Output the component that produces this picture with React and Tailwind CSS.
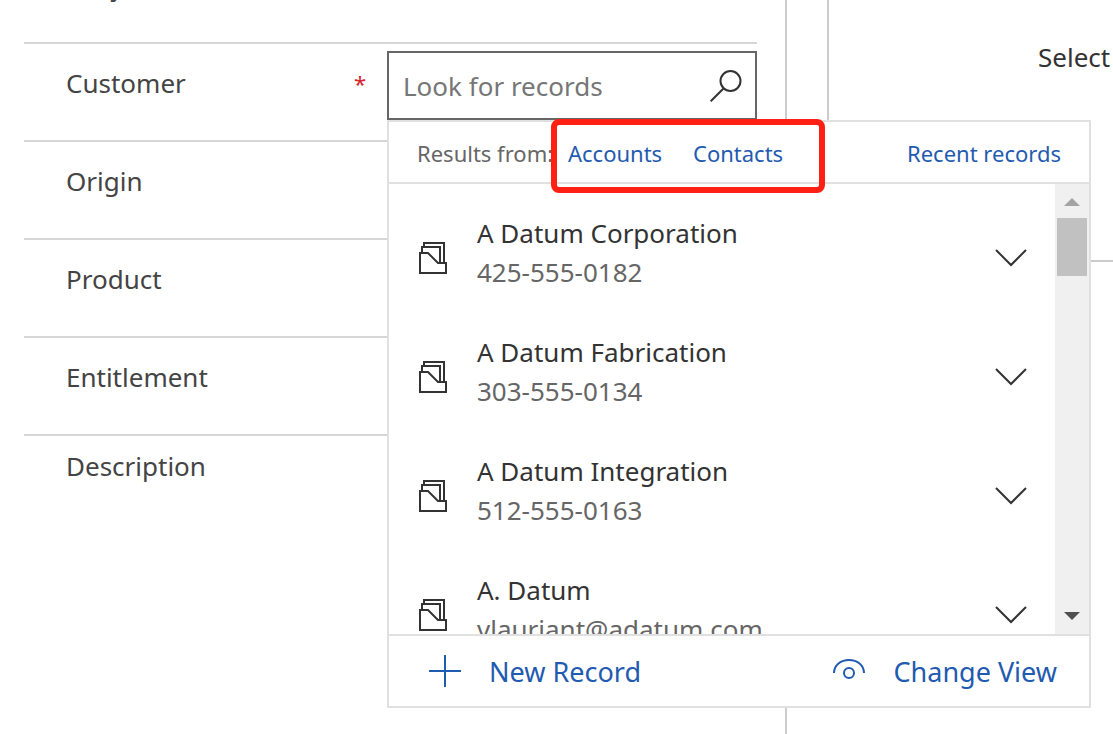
const records = [
  { name: 'A Datum Corporation', detail: '425-555-0182' },
  { name: 'A Datum Fabrication', detail: '303-555-0134' },
  { name: 'A Datum Integration', detail: '512-555-0163' },
  { name: 'A. Datum', detail: 'vlauriant@adatum.com' },
];

function SearchIcon() {
  return (
    <svg width="32" height="32" viewBox="0 0 32 32" fill="none" stroke="#333" strokeWidth="2" aria-hidden="true">
      <circle cx="20.5" cy="11" r="10" />
      <path d="M13.5 18.5 0.7 31.3" />
    </svg>
  );
}

function AccountIcon() {
  return (
    <svg width="28" height="32" viewBox="0 0 28 32" fill="none" stroke="#333" strokeWidth="2" aria-hidden="true">
      <path d="M1 11H9L19 21H27V31H1Z" />
      <path d="M3 11V5H21V21" />
      <path d="M5 5V1H25V21" />
    </svg>
  );
}

function ChevronIcon() {
  return (
    <svg width="32" height="18" viewBox="0 0 32 18" fill="none" stroke="#333" strokeWidth="2" aria-hidden="true">
      <path d="M1 1 16 16 31 1" />
    </svg>
  );
}

function PlusIcon() {
  return (
    <svg width="32" height="32" viewBox="0 0 32 32" fill="none" stroke="currentColor" strokeWidth="2" aria-hidden="true">
      <path d="M16 0V32M0 16H32" />
    </svg>
  );
}

function ViewIcon() {
  return (
    <svg width="32" height="32" viewBox="0 0 32 32" fill="none" stroke="currentColor" strokeWidth="2" aria-hidden="true">
      <path d="M1 18C1 10 8 5 16 5S31 10 31 18" />
      <circle cx="16" cy="18" r="5" />
    </svg>
  );
}

function Row({ label, last }) {
  return (
    <div className={last ? 'px-[42px] py-[10px]' : 'flex h-[98px] border-b-2 border-[#d6d6d6] px-[42px] pt-[19px]'}>
      {label}
    </div>
  );
}

function LookupMenu() {
  return (
    <div className="absolute left-0 top-full z-10 w-[704px] border-2 border-[#e0e0e0] bg-white">
      <div className="flex h-[62px] items-center border-b-2 border-[#e0e0e0] px-[28px] pt-[2px] text-[22px] text-[#666]">
        <span className="w-[151px] whitespace-nowrap">Results from:</span>
        <a href="#accounts" className="w-[125px] text-[#1f5bb0]">Accounts</a>
        <a href="#contacts" className="text-[#1f5bb0]">Contacts</a>
        <a href="#recent" className="ml-auto text-[#1f5bb0]">Recent records</a>
      </div>
      <div className="absolute left-[162px] top-[-3px] h-[74px] w-[274px] rounded-lg border-6 border-[#ff2014]" aria-hidden="true" />
      <div className="flex h-[450px]">
        <ul className="flex-1 overflow-hidden pt-[14px]">
          {records.map((record) => (
            <li key={record.name} className="flex h-[119px] items-center pl-[30px] pr-[28px]">
              <AccountIcon />
              <div className="ml-[30px] flex-1 pb-[10px] leading-[39px]">
                <div className="text-[#333]">{record.name}</div>
                <div className="text-[#666]">{record.detail}</div>
              </div>
              <button type="button" aria-label={'Show details of ' + record.name}>
                <ChevronIcon />
              </button>
            </li>
          ))}
        </ul>
        <div className="flex w-[34px] flex-col items-center justify-between bg-[#f0f0f0] py-[14px]" aria-hidden="true">
          <div className="flex flex-col items-center gap-[12px]">
            <svg width="16" height="8" viewBox="0 0 16 8" fill="#a3a3a3"><path d="M0 8 8 0 16 8Z" /></svg>
            <div className="h-[58px] w-[30px] bg-[#c1c1c1]" />
          </div>
          <svg width="16" height="8" viewBox="0 0 16 8" fill="#505050"><path d="M0 0H16L8 8Z" /></svg>
        </div>
      </div>
      <div className="flex h-[72px] items-center justify-between border-t-2 border-[#e0e0e0] pl-[40px] pr-[32px] text-[27px] text-[#1f5bb0]">
        <button type="button" className="flex items-center gap-[28px]">
          <PlusIcon />
          <span className="pt-[2px]">New Record</span>
        </button>
        <button type="button" className="flex items-center gap-[28px]">
          <ViewIcon />
          <span className="pt-[2px]">Change View</span>
        </button>
      </div>
    </div>
  );
}

export default function App() {
  return (
    <div className="grid min-h-screen grid-cols-[787fr_286fr] gap-[40px] overflow-hidden bg-white font-['Noto_Sans','Open_Sans',sans-serif] text-[26px] leading-[40px] text-[#444]">
      <section className="border-r-2 border-[#ccc] pl-[24px] pr-[28px]">
        <div className="flex h-[44px] items-end overflow-hidden border-b-2 border-[#d6d6d6] px-[42px] pb-[36px]">
          Subject
        </div>
        <div className="flex h-[98px] border-b-2 border-[#d6d6d6] pl-[42px]">
          <label htmlFor="customer" className="flex flex-1 justify-between pr-[21px] pt-[19px]">
            Customer
            <span className="text-[22px] text-[#d8232a]">*</span>
          </label>
          <div className="relative mt-[7px] h-[69px] w-[370px]">
            <div className="flex h-full items-center border-2 border-[#666] bg-white pl-[14px] pr-[13px]">
              <input
                id="customer"
                type="text"
                placeholder="Look for records"
                className="min-w-0 flex-1 outline-none placeholder:text-[#767676]"
              />
              <button type="button" aria-label="Search">
                <SearchIcon />
              </button>
            </div>
            <LookupMenu />
          </div>
        </div>
        <Row label="Origin" />
        <Row label="Product" />
        <Row label="Entitlement" />
        <Row label="Description" last />
      </section>
      <section className="h-[262px] overflow-hidden border-b-2 border-l-2 border-[#ccc] pl-[209px] pt-[37px] text-[#333]">
        Select
      </section>
    </div>
  );
}
